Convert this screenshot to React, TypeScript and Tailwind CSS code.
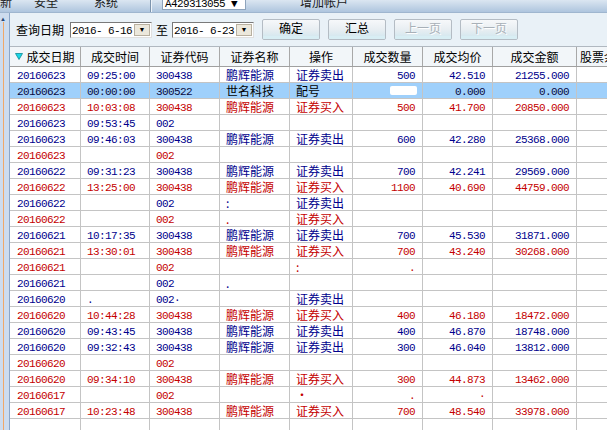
import React from 'react'

type Row = {
  c: 'b' | 'r' | 'h'
  d: string
  t: string
  code: string
  name: string
  op: string
  q: string
  p: string
  a: string
}

const rows: Row[] = [
  { c: 'b', d: '20160623', t: '09:25:00', code: '300438', name: '鹏辉能源', op: '证券卖出', q: '500', p: '42.510', a: '21255.000' },
  { c: 'h', d: '20160623', t: '00:00:00', code: '300522', name: '世名科技', op: '配号', q: '', p: '0.000', a: '0.000' },
  { c: 'r', d: '20160623', t: '10:03:08', code: '300438', name: '鹏辉能源', op: '证券买入', q: '500', p: '41.700', a: '20850.000' },
  { c: 'b', d: '20160623', t: '09:53:45', code: '002', name: '', op: '', q: '', p: '', a: '' },
  { c: 'b', d: '20160623', t: '09:46:03', code: '300438', name: '鹏辉能源', op: '证券卖出', q: '600', p: '42.280', a: '25368.000' },
  { c: 'r', d: '20160623', t: '', code: '002', name: '', op: '', q: '', p: '', a: '' },
  { c: 'b', d: '20160622', t: '09:31:23', code: '300438', name: '鹏辉能源', op: '证券卖出', q: '700', p: '42.241', a: '29569.000' },
  { c: 'r', d: '20160622', t: '13:25:00', code: '300438', name: '鹏辉能源', op: '证券买入', q: '1100', p: '40.690', a: '44759.000' },
  { c: 'b', d: '20160622', t: '', code: '002', name: ':', op: '证券卖出', q: '', p: '', a: '' },
  { c: 'r', d: '20160622', t: '', code: '002', name: '.', op: '证券买入', q: '', p: '', a: '' },
  { c: 'b', d: '20160621', t: '10:17:35', code: '300438', name: '鹏辉能源', op: '证券卖出', q: '700', p: '45.530', a: '31871.000' },
  { c: 'r', d: '20160621', t: '13:30:01', code: '300438', name: '鹏辉能源', op: '证券买入', q: '700', p: '43.240', a: '30268.000' },
  { c: 'r', d: '20160621', t: '', code: '002', name: '', op: ':', q: '.', p: '', a: '' },
  { c: 'b', d: '20160621', t: '', code: '002', name: '.', op: '', q: '', p: '', a: '' },
  { c: 'b', d: '20160620', t: '.', code: '002·', name: '', op: '证券卖出', q: '', p: '', a: '' },
  { c: 'r', d: '20160620', t: '10:44:28', code: '300438', name: '鹏辉能源', op: '证券买入', q: '400', p: '46.180', a: '18472.000' },
  { c: 'b', d: '20160620', t: '09:43:45', code: '300438', name: '鹏辉能源', op: '证券卖出', q: '400', p: '46.870', a: '18748.000' },
  { c: 'b', d: '20160620', t: '09:32:43', code: '300438', name: '鹏辉能源', op: '证券卖出', q: '300', p: '46.040', a: '13812.000' },
  { c: 'r', d: '20160620', t: '', code: '002', name: '', op: '', q: '', p: '', a: '' },
  { c: 'r', d: '20160620', t: '09:34:10', code: '300438', name: '鹏辉能源', op: '证券买入', q: '300', p: '44.873', a: '13462.000' },
  { c: 'r', d: '20160617', t: '', code: '002', name: '', op: '·', q: '.', p: '·', a: '' },
  { c: 'r', d: '20160617', t: '10:23:48', code: '300438', name: '鹏辉能源', op: '证券买入', q: '700', p: '48.540', a: '33978.000' },
  { c: 'b', d: '', t: '', code: '', name: '', op: '', q: '', p: '', a: '' },
]

const num = "font-['Liberation_Mono',monospace] text-[11px] tracking-[-0.6px]"
const cn = "font-['Noto_Sans_CJK_SC',sans-serif] text-[12px]"

// digits sit a bit high in Liberation Mono, nudge them down
function N({ v }: { v: string }) {
  return <span className="relative top-[2px] whitespace-pre">{v}</span>
}

function DateBox({ value }: { value: string }) {
  return (
    <div className="flex h-[16px] w-[82px] items-center border border-t-[#7a7a7a] border-l-[#7a7a7a] border-r-[#e0e0e0] border-b-[#e0e0e0] bg-white">
      <span className={`${num} flex-1 pl-[1px] leading-none text-black`}>
        <N v={value} />
      </span>
      <div className="mr-[1px] flex h-[12px] w-[16px] shrink-0 items-center justify-center border border-[#b8b0a0] bg-[#ece8dc]">
        <span className="text-[7px] leading-none text-black">▼</span>
      </div>
    </div>
  )
}

function Btn({ label, disabled }: { label: string; disabled?: boolean }) {
  return (
    <div className="flex h-[21px] w-[58px] flex-col overflow-hidden rounded-[2px] border border-[#b4bcc4] bg-gradient-to-b from-[#f6f8fa] via-[#e8eef2] to-[#cfe6ee]">
      <div
        className={`${cn} flex flex-1 items-center justify-center leading-none ${
          disabled ? 'text-[#a8b0b8] [text-shadow:1px_1px_0_#ffffff]' : 'text-black'
        }`}
      >
        {label}
      </div>
      <div className="h-[3px] bg-[#d8eef4]" />
    </div>
  )
}

export default function App() {
  const color = (c: Row['c']) => (c === 'r' ? 'text-[#c40000]' : c === 'h' ? 'text-[#0a0a40]' : 'text-[#00008c]')

  return (
    <div className="relative flex h-[430px] w-[607px] flex-col overflow-hidden bg-[#e9f1f7]">
      {/* top menu bar, cut off */}
      <div className="flex h-[13px] shrink-0 items-start overflow-hidden border-b border-[#9fb6cf] bg-gradient-to-b from-[#dbe6f1] to-[#aec5de]">
        <span className={`${cn} -mt-[7px] w-[34px] text-[#1a1a1a]`}>新</span>
        <span className={`${cn} -mt-[7px] w-[60px] text-[#1a1a1a]`}>安全</span>
        <span className={`${cn} -mt-[7px] w-[56px] text-[#1a1a1a]`}>系统</span>
        <div className="h-[13px] w-[2px] border-l border-[#7d94ad] border-r border-r-[#eef4fa]" />
        <div className="ml-[10px] flex h-[10px] w-[84px] items-end border border-t-0 border-[#8ea4bc] bg-white">
          <span className={`${num} -mb-[1px] pl-[2px] leading-[12px] text-black`}>A429313055 ▼</span>
        </div>
        <span className={`${cn} -mt-[7px] ml-[54px] text-[#1a1a1a]`}>增加帐户</span>
      </div>

      <div className="flex flex-1">
        {/* left strip */}
        <div className="relative w-[10px] shrink-0 border-r border-[#8aa6c8] bg-[#cddcee]">
          <span className="absolute left-0 top-[3px] text-[6px] leading-none text-[#284878]">▲</span>
          <div className="absolute left-[3px] top-[9px] bottom-0 w-[1px] bg-[#f0a868]" />
        </div>

        <div className="flex flex-1 flex-col">
          {/* toolbar */}
          <div className="flex h-[33px] shrink-0 items-center pl-[6px]">
            <span className={`${cn} mr-[6px] text-black`}>查询日期</span>
            <DateBox value="2016- 6-16" />
            <span className={`${cn} mx-[4px] text-black`}>至</span>
            <DateBox value="2016- 6-23" />
            <div className="ml-[8px] flex gap-[8px]">
              <Btn label="确定" />
              <Btn label="汇总" />
              <Btn label="上一页" disabled />
              <Btn label="下一页" disabled />
            </div>
          </div>

          {/* table */}
          <div className="flex flex-1 flex-col border-t border-[#b0b8c0]">
            <div className={`${cn} flex h-[20px] shrink-0 border-b border-[#a0a0a0] bg-[#f2f6f9] text-black`}>
              <div className="flex w-[71px] items-center justify-center gap-[3px] border-r border-[#a8a8a8]">
                <svg width="8" height="7" viewBox="0 0 8 7">
                  <path d="M0.5 0.5 H7.5 L4 6.5 Z" fill="#19d6e6" stroke="#0a8a96" strokeWidth="0.8" />
                </svg>
                <span>成交日期</span>
              </div>
              <div className="flex w-[69px] items-center justify-center border-r border-[#a8a8a8]">成交时间</div>
              <div className="flex w-[70px] items-center justify-center border-r border-[#a8a8a8]">证券代码</div>
              <div className="flex w-[70px] items-center justify-center border-r border-[#a8a8a8]">证券名称</div>
              <div className="flex w-[63px] items-center justify-center border-r border-[#a8a8a8]">操作</div>
              <div className="flex w-[70px] items-center justify-center border-r border-[#a8a8a8]">成交数量</div>
              <div className="flex w-[70px] items-center justify-center border-r border-[#a8a8a8]">成交均价</div>
              <div className="flex w-[84px] items-center justify-center border-r border-[#a8a8a8]">成交金额</div>
              <div className="flex w-[60px] items-center pl-[3px]">股票余额</div>
            </div>

            {rows.map((r, i) => (
              <div
                key={i}
                className={`flex h-[16px] shrink-0 border-b border-[#c4c4c4] ${color(r.c)} ${
                  r.c === 'h' ? 'bg-[#9fd0fb]' : 'bg-white'
                }`}
              >
                <div className={`${num} flex w-[71px] items-center border-r border-[#c4c4c4] pl-[7px] leading-none`}>
                  <N v={r.d} />
                </div>
                <div className={`${num} flex w-[69px] items-center border-r border-[#c4c4c4] pl-[6px] leading-none`}>
                  <N v={r.t} />
                </div>
                <div className={`${num} flex w-[70px] items-center border-r border-[#c4c4c4] pl-[6px] leading-none`}>
                  <N v={r.code} />
                </div>
                <div className={`${cn} flex w-[70px] items-center border-r border-[#c4c4c4] pl-[6px] leading-none ${r.c === 'h' ? 'text-black' : ''}`}>
                  {r.name}
                </div>
                <div className={`${cn} flex w-[63px] items-center border-r border-[#c4c4c4] pl-[6px] leading-none ${r.c === 'h' ? 'text-black' : ''}`}>
                  {r.op}
                </div>
                <div className={`${num} flex w-[70px] items-center justify-end border-r border-[#c4c4c4] pr-[7px] leading-none`}>
                  {r.c === 'h' ? <span className="mr-[-2px] h-[9px] w-[27px] rounded-[2px] bg-white" /> : <N v={r.q} />}
                </div>
                <div className={`${num} flex w-[70px] items-center justify-end border-r border-[#c4c4c4] pr-[7px] leading-none`}>
                  <N v={r.p} />
                </div>
                <div className={`${num} flex w-[84px] items-center justify-end border-r border-[#c4c4c4] pr-[7px] leading-none`}>
                  <N v={r.a} />
                </div>
                <div className="w-[60px]" />
              </div>
            ))}
          </div>
        </div>
      </div>
    </div>
  )
}
